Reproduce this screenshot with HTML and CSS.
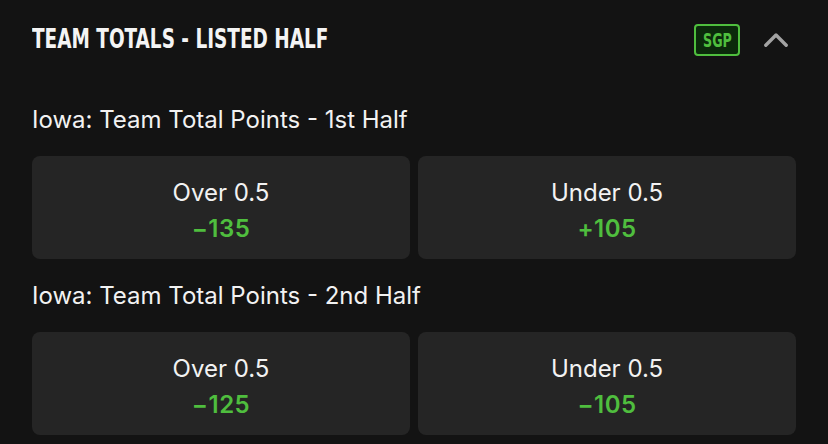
FILE: index.html
```html
<!DOCTYPE html>
<html>
<head>
<meta charset="utf-8">
<link rel="stylesheet" href="styles.css">
</head>
<body>
<div class="panel">
  <div class="header">
    <h1 class="title">TEAM TOTALS - LISTED HALF</h1>
    <div class="actions">
      <span class="sgp"><span class="sgp-text">SGP</span></span>
      <svg class="chevron" width="24" height="16" viewBox="0 0 24 16"><path d="M1.8 13.2 L12 3 L22.2 13.2" fill="none" stroke="#a3a3a3" stroke-width="3.4" stroke-linecap="round" stroke-linejoin="round"/></svg>
    </div>
  </div>
  <div class="market">
    <div class="market-name">Iowa: Team Total Points - 1st Half</div>
    <div class="odds">
      <div class="bet"><span class="label">Over 0.5</span><span class="price">−135</span></div>
      <div class="bet"><span class="label">Under 0.5</span><span class="price">+105</span></div>
    </div>
  </div>
  <div class="market">
    <div class="market-name">Iowa: Team Total Points - 2nd Half</div>
    <div class="odds">
      <div class="bet"><span class="label">Over 0.5</span><span class="price">−125</span></div>
      <div class="bet"><span class="label">Under 0.5</span><span class="price">−105</span></div>
    </div>
  </div>
</div>
</body>
</html>
```
FILE: styles.css
```css
html, body {
  margin: 0;
  padding: 0;
  background: #131313;
}
body {
  width: 828px;
  height: 444px;
  overflow: hidden;
  font-family: Inter, "Noto Sans", sans-serif;
  color: #f2f2f2;
}
.panel {
  padding: 0 32px;
}
.header {
  height: 80px;
  display: flex;
  align-items: center;
  justify-content: space-between;
}
.title {
  margin: -4px 0 0 0;
  font-family: "DejaVu Sans", sans-serif;
  font-stretch: condensed;
  font-weight: bold;
  font-size: 27px;
  color: #f4f4f4;
  display: inline-block;
  transform: scaleX(0.76);
  transform-origin: left center;
  white-space: nowrap;
}
.actions {
  display: flex;
  align-items: center;
  gap: 24px;
  padding-right: 8px;
}
.sgp {
  box-sizing: border-box;
  width: 46px;
  height: 32px;
  border: 2px solid #4fbf3e;
  border-radius: 4px;
  background: #0b2a0b;
  color: #4fbf3e;
  font-family: "DejaVu Sans", sans-serif;
  font-stretch: condensed;
  font-weight: bold;
  font-size: 19px;
  line-height: 1;
  display: flex;
  align-items: center;
  justify-content: center;
}
.sgp-text {
  display: inline-block;
  transform: scaleX(0.74);
  white-space: nowrap;
}
.chevron {
  display: block;
}
.market {
  margin-top: 26px;
}
.market + .market {
  margin-top: 23px;
}
.market-name {
  font-size: 24px;
  line-height: 28px;
  height: 28px;
  color: #f2f2f2;
}
.odds {
  margin-top: 22px;
  display: grid;
  grid-template-columns: 1fr 1fr;
  gap: 8px;
}
.bet {
  box-sizing: border-box;
  height: 103px;
  padding-top: 6px;
  background: #252525;
  border-radius: 8px;
  display: flex;
  flex-direction: column;
  align-items: center;
  justify-content: center;
  gap: 6px;
}
.label {
  font-size: 24px;
  line-height: 30px;
  color: #f2f2f2;
}
.price {
  font-size: 24px;
  line-height: 30px;
  font-weight: 600;
  letter-spacing: 0.5px;
  color: #4fbe3e;
}
```
